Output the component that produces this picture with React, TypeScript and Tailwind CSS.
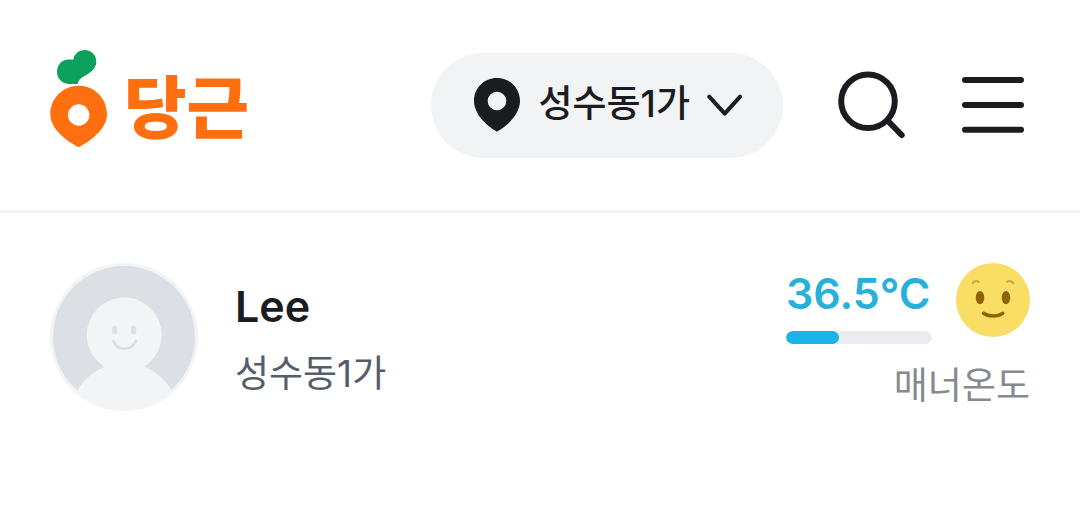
import React from "react";

type Profile = {
  name: string;
  region: string;
  temperature: number;
};

const profile: Profile = {
  name: "Lee",
  region: "성수동1가",
  temperature: 36.5,
};

const Logo = () => (
  <a href="#" className="flex items-center gap-4" aria-label="당근">
    <svg className="h-[111px] w-[58px]" viewBox="50 50 58 111" aria-hidden="true">
      <path
        fill="#0ba15c"
        d="M77.7 83.9H69C62 83.9 57 78.500 57 71.800 57 65 62 59.500 68.500 59.500c1.800 0 3.400.1 4.700.3C74 54 79 50 84.700 50 91.500 50 96.300 55.200 96.300 61.500c0 5-2.800 8.500-7 11.500-4.500 3.200-11 5.500-11.600 10.900z"
      />
      <path
        fill="#ff6f0f"
        fillRule="evenodd"
        d="M78.700 147.200C74 145 50.300 132 50.300 114.500 50.300 98 63 85.700 78.700 85.700S107 98 107 114.500C107 132 83 145 78.700 147.200zM78.700 104.300a10.700 10.700 0 1 0 0 21.400 10.700 10.700 0 0 0 0-21.400z"
      />
    </svg>
    <span className="pt-1 text-[68px] leading-[80px] font-black text-[#ff6f0f]">당근</span>
  </a>
);

const RegionButton = ({ region }: { region: string }) => (
  <button
    type="button"
    className="flex h-[105px] items-center gap-[17px] rounded-full bg-[#f2f3f5] pr-10 pl-[42px]"
  >
    <svg className="h-[56px] w-[48px]" viewBox="474 78 48 56" aria-hidden="true">
      <path
        fill="#1b1c20"
        fillRule="evenodd"
        d="M498 131.500C495 130.500 475 117.500 475 101 475 88 485 78 498 78s23 10 23 23c0 16.500-20 29.500-23 30.500zM498 91.700a9.300 9.300 0 1 0 0 18.600 9.300 9.300 0 0 0 0-18.600z"
      />
    </svg>
    <span className="pb-1 text-[37px] leading-[48px] font-medium text-[#1b1c20]">{region}</span>
    <svg className="h-[24px] w-[36px]" viewBox="707 94 36 24" fill="none" aria-hidden="true">
      <path
        d="M709.300 96.700l15.400 17 15.400-17"
        stroke="#1b1c20"
        strokeWidth="4"
        strokeLinecap="round"
        strokeLinejoin="round"
      />
    </svg>
  </button>
);

const Header = () => (
  <header className="flex items-center justify-between border-b-[3px] border-[#f3f3f4] px-[50px] pt-[50px] pb-[49px]">
    <Logo />
    <div className="flex items-center gap-12">
      <RegionButton region={profile.region} />
      <button type="button" aria-label="검색">
        <svg className="h-[72px] w-[77px]" viewBox="831 70 77 72" fill="none" stroke="#1b1c20" strokeWidth="6" strokeLinecap="round">
          <circle cx="868" cy="101.300" r="26.800" />
          <path d="M888 121l13.700 14" />
        </svg>
      </button>
      <button type="button" aria-label="메뉴">
        <svg className="h-[72px] w-[74px]" viewBox="956 70 74 72" fill="none" stroke="#1b1c20" strokeWidth="6" strokeLinecap="round">
          <path d="M965 80h56M965 105h56M965 129.700h56" />
        </svg>
      </button>
    </div>
  </header>
);

const Avatar = () => (
  <svg className="size-[148px] shrink-0" viewBox="50 263 148 148" aria-hidden="true">
    <defs>
      <clipPath id="avatar-clip">
        <circle cx="124" cy="337" r="74" />
      </clipPath>
    </defs>
    <circle cx="124" cy="337" r="74" fill="#f2f3f6" />
    <circle cx="124" cy="337" r="71" fill="#dce0e5" />
    <g clipPath="url(#avatar-clip)" fill="#f2f4f6">
      <circle cx="124.500" cy="417.400" r="54.400" />
      <circle cx="124.200" cy="335" r="37.500" />
    </g>
    <rect x="112.200" y="325.400" width="5" height="8.600" rx="2.500" fill="#dce0e5" />
    <rect x="131.200" y="325.400" width="5" height="8.600" rx="2.500" fill="#dce0e5" />
    <path
      d="M113.300 341c4 10.300 18.500 10.300 22.500 0"
      fill="none"
      stroke="#dce0e5"
      strokeWidth="2.700"
      strokeLinecap="round"
    />
  </svg>
);

const Face = () => (
  <svg className="size-[74px]" viewBox="956 263 74 74" fill="none" aria-hidden="true">
    <circle cx="993" cy="300" r="37" fill="#f9dd65" />
    <ellipse cx="980" cy="297.700" rx="4.300" ry="6.600" fill="#8f6200" />
    <ellipse cx="1006" cy="297.700" rx="4.300" ry="6.600" fill="#8f6200" />
    <path d="M983.500 313.300c5 3.500 14.500 3.500 19.200 0" stroke="#8f6200" strokeWidth="3.500" strokeLinecap="round" />
    <g stroke="#ceab42" strokeWidth="2.200" strokeLinecap="round">
      <path d="M972.800 283.300c1.200-2.400 4-2.900 6-1.500" />
      <path d="M1013.200 283.300c-1.200-2.400-4-2.900-6-1.500" />
    </g>
  </svg>
);

const MannerTemperature = ({ value }: { value: number }) => (
  <div className="flex flex-col items-end">
    <div className="flex items-start gap-6">
      <div className="w-[146px]">
        <p className="text-[43px] leading-[60px] font-semibold whitespace-nowrap text-[#27b1da]">
          {value}°C
        </p>
        <div
          role="progressbar"
          aria-label="매너온도"
          aria-valuenow={value}
          aria-valuemin={0}
          aria-valuemax={100}
          className="mt-2 h-[13px] overflow-hidden rounded-full bg-[#ebecef]"
        >
          <div className="h-full rounded-full bg-[#1bb4e7]" style={{ width: `${value}%` }} />
        </div>
      </div>
      <Face />
    </div>
    <p className="mt-5 text-[37px] leading-[44px] text-[#868a90]">매너온도</p>
  </div>
);

export default function App() {
  return (
    <div className="min-h-screen bg-white font-['Inter','Noto_Sans_CJK_KR',sans-serif]">
      <Header />
      <main className="flex items-start justify-between px-[50px] py-[50px]">
        <section className="flex items-center gap-[37px]">
          <Avatar />
          <div className="flex flex-col gap-4 pb-[2px]">
            <h1 className="text-[43px] leading-[60px] font-semibold text-[#1b1c20]">{profile.name}</h1>
            <p className="text-[37px] leading-[44px] text-[#555d6a]">{profile.region}</p>
          </div>
        </section>
        <MannerTemperature value={profile.temperature} />
      </main>
    </div>
  );
}
